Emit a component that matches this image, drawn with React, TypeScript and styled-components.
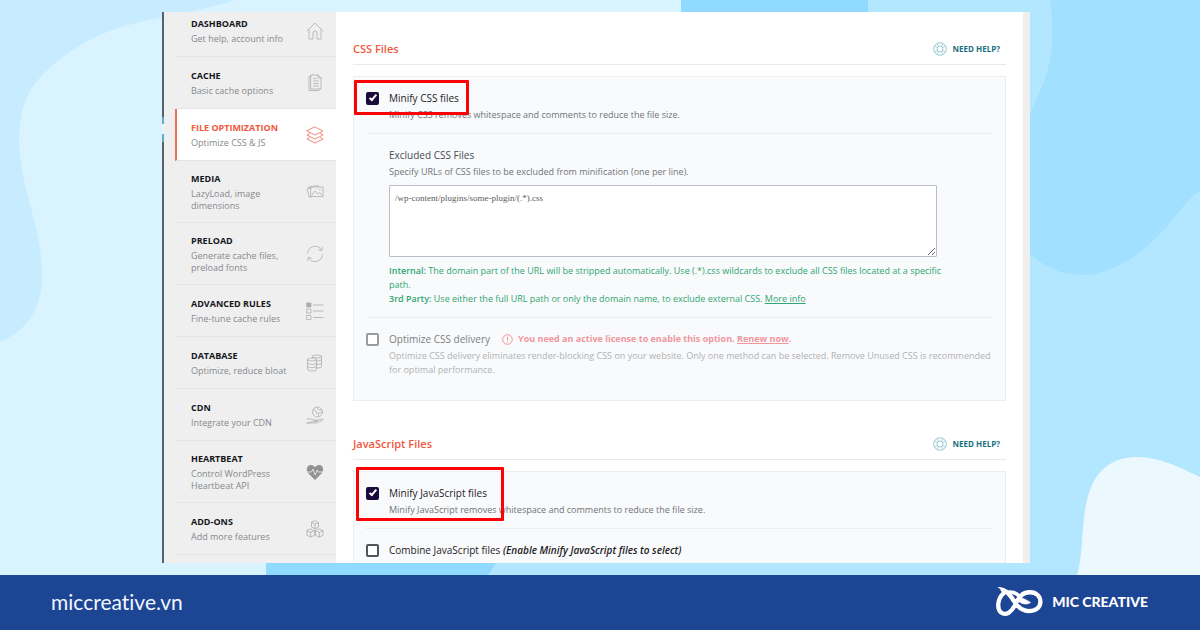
import React from "react";
import styled, { createGlobalStyle, css } from "styled-components";

const GlobalStyle = createGlobalStyle`
  *, *::before, *::after { box-sizing: border-box; }
  html, body, #root { height: 100%; }
  body {
    margin: 0;
    font-family: "Open Sans", "Noto Sans", sans-serif;
    font-size: 9px;
    line-height: 14px;
    color: #747a80;
  }
  h2, h3, p { margin: 0; }
`;

const Page = styled.div`
  position: relative;
  display: flex;
  flex-direction: column;
  height: 100%;
  background: #d9f3ff;
`;

const Backdrop = styled.svg`
  position: absolute;
  inset: 0;
  width: 100%;
  height: 100%;
`;

const Stage = styled.main`
  position: relative;
  flex: 1;
  min-height: 0;
  display: flex;
  padding: 12px 170px 12px 162px;
`;

const Screen = styled.div`
  flex: 1;
  min-width: 0;
  display: flex;
  overflow: hidden;
  background: #fff;
  border-right: 7px solid #f0efed;
`;

/* ---------- Sidebar ---------- */

const Sidebar = styled.nav`
  flex: none;
  width: 174px;
  padding-left: 13px;
  background:
    linear-gradient(#54636b 0 105px, #6ba6cf 105px 112px, #e4f6ff 112px 122px, #6ba6cf 122px 130px, #54636b 130px) left / 2px 100% no-repeat,
    #efefef;
`;

const NavList = styled.div`
  margin-top: -7px;
`;

const NavItem = styled.a<{ $active?: boolean }>`
  display: flex;
  align-items: center;
  justify-content: space-between;
  min-height: 52px;
  padding: 11px 12px 10px 14px;
  border-left: 2px solid transparent;
  border-bottom: 1px solid #e3e4e5;
  color: #868a8e;
  text-decoration: none;
  ${(p) =>
    p.$active &&
    css`
      background: #fff;
      border-left-color: #ee6f57;
    `}
`;

const NavText = styled.span`
  display: flex;
  flex-direction: column;
  gap: 2px;
  width: 106px;
`;

const NavTitle = styled.span<{ $active?: boolean }>`
  font-weight: 700;
  line-height: 14px;
  white-space: nowrap;
  color: ${(p) => (p.$active ? "#f0593e" : "#15171c")};
`;

const NavDesc = styled.span`
  line-height: 12px;
`;

const NavIcon = styled.svg<{ $active?: boolean }>`
  flex: none;
  width: 18px;
  height: 18px;
  fill: none;
  stroke: ${(p) => (p.$active ? "#ee6f57" : "#acaeb0")};
  stroke-width: 0.8;
  stroke-linejoin: round;
  stroke-linecap: round;
`;

/* ---------- Settings ---------- */

const Content = styled.div`
  flex: 1;
  min-width: 0;
  padding: 22px 17px 0;
`;

const Section = styled.section`
  margin-bottom: 28px;
`;

const SectionHead = styled.header`
  display: flex;
  align-items: center;
  justify-content: space-between;
  height: 31px;
  margin-bottom: 11px;
  padding-right: 6px;
  border-bottom: 1px solid #e2ebee;
`;

const SectionTitle = styled.h2`
  font-size: 11px;
  font-weight: 600;
  line-height: 16px;
  color: #f0593e;
`;

const HelpLink = styled.a`
  display: flex;
  align-items: center;
  gap: 6px;
  font-size: 8px;
  font-weight: 700;
  color: #1d6f80;
  text-decoration: none;
`;

const HelpIcon = styled.svg`
  width: 14px;
  height: 14px;
  fill: none;
  stroke: #7fbcc7;
  stroke-width: 0.8;
`;

const Panel = styled.div`
  padding: 0 12px;
  border: 1px solid #eceef0;
  background: #f9fafb;
`;

const Row = styled.div<{ $last?: boolean; $indent?: boolean }>`
  position: relative;
  padding: 13px 0 ${(p) => (p.$last ? 23 : 11)}px ${(p) => (p.$indent ? 23 : 0)}px;
  border-bottom: ${(p) => (p.$last ? "none" : "1px solid #eceff1")};
`;

const OptionLine = styled.div`
  display: flex;
  align-items: center;
  height: 16px;
`;

const Checkbox = styled.input`
  appearance: none;
  flex: none;
  display: grid;
  place-items: center;
  width: 13px;
  height: 13px;
  margin: 0 10px 0 0;
  border: 2px solid #50565c;
  border-radius: 2px;
  background: #fff;
  &:checked {
    border-color: #1b0b3b;
    background: #1b0b3b;
  }
  &:checked::after {
    content: "";
    width: 4px;
    height: 8px;
    margin-top: -2px;
    border: solid #fff;
    border-width: 0 2px 2px 0;
    transform: rotate(40deg);
  }
  &:disabled {
    border-color: #9a9da0;
  }
`;

const OptionLabel = styled.label<{ $muted?: boolean }>`
  font-size: 10px;
  font-weight: 500;
  line-height: 16px;
  white-space: nowrap;
  color: ${(p) => (p.$muted ? "#7c8084" : "#1d2126")};
`;

const FieldLabel = styled.label`
  display: block;
  font-size: 10px;
  font-weight: 500;
  line-height: 16px;
  color: #484d53;
`;

const Note = styled.em`
  font-weight: 600;
`;

const Description = styled.p<{ $muted?: boolean; $indent?: boolean }>`
  margin-top: 2px;
  padding-left: ${(p) => (p.$indent ? 23 : 0)}px;
  color: ${(p) => (p.$muted ? "#b0b3b6" : "#6f7479")};
`;

const UrlBox = styled.textarea`
  display: block;
  width: calc(100% - 56px);
  height: 72px;
  margin: 6px 0 7px;
  padding: 5px;
  border: 1px solid #b9bcc9;
  border-radius: 1px;
  background: #fff;
  font: 9px/14px "Liberation Serif", serif;
  color: #5b5b5b;
`;

const Hint = styled.p`
  padding-right: 44px;
  color: #2fa673;
  a { color: inherit; }
  strong { font-weight: 600; }
`;

const License = styled.span`
  display: flex;
  align-items: center;
  gap: 5px;
  margin-left: 12px;
  font-size: 9px;
  font-weight: 700;
  white-space: nowrap;
  color: #f0979e;
  a { color: inherit; }
`;

const AlertIcon = styled.svg`
  width: 11px;
  height: 11px;
  fill: none;
  stroke: #f0979e;
`;

const Marker = styled.div<{ $x: number; $y: number; $w: number; $h: number }>`
  position: absolute;
  left: ${(p) => p.$x}px;
  top: ${(p) => p.$y}px;
  width: ${(p) => p.$w}px;
  height: ${(p) => p.$h}px;
  border: 3px solid #fb0207;
  border-radius: 1px;
  pointer-events: none;
`;

/* ---------- Footer ---------- */

const Footer = styled.footer`
  position: relative;
  flex: none;
  display: flex;
  align-items: center;
  justify-content: space-between;
  height: 55px;
  padding: 0 52px 2px 51px;
  background: #1c4594;
  color: #fff;
  font-family: Lato, sans-serif;
  font-variant-ligatures: none;
`;

const Site = styled.a`
  font-size: 21px;
  line-height: 28px;
  color: #f2f6ff;
  text-decoration: none;
`;

const Brand = styled.div`
  display: flex;
  align-items: center;
  gap: 8px;
  font-size: 14px;
  font-weight: 900;
  line-height: 20px;
`;

const Logo = styled.svg`
  width: 49px;
  height: 31px;
  fill: none;
  stroke: #fff;
  stroke-width: 13;
  stroke-linecap: round;
`;

type Item = { title: string; desc: string; active?: boolean; icon: React.ReactNode };

const items: Item[] = [
  {
    title: "DASHBOARD",
    desc: "Get help, account info",
    icon: <path d="M1 9 9 1l8 8M3 8v9h4v-6a2 2 0 0 1 4 0v6h4V8" />,
  },
  {
    title: "CACHE",
    desc: "Basic cache options",
    icon: <path d="M5 1h7l3 3v11H5zM12 1v3h3M5 2.500H3v14h10V15M7.500 7h5M7.500 9.500h5M7.500 12h5M7.500 4.500H10" />,
  },
  {
    title: "FILE OPTIMIZATION",
    desc: "Optimize CSS & JS",
    active: true,
    icon: <path d="m9 1 8 4-8 4-8-4zM3.500 7.500 1 9l8 4 8-4-2.500-1.500M3.500 11.500 1 13l8 4 8-4-2.500-1.500" />,
  },
  {
    title: "MEDIA",
    desc: "LazyLoad, image dimensions",
    icon: <path d="M5 4h12v9.500H5zM5 5 1 6l2.500 8.500L6 13.500M3 5.500 2.500 4 12 2.500l.5 1.500M6 12l3-4 3 3 1.500-1.500 2.500 2.500M13.500 6.500h.6" />,
  },
  {
    title: "PRELOAD",
    desc: "Generate cache files, preload fonts",
    icon: <path d="M1.500 8a7.600 7.600 0 0 1 14-3M16.500 10a7.600 7.600 0 0 1-14 3M16.500 2.500 15.600 5.500 12.800 5M1.500 15.500l.9-3 2.800.5" />,
  },
  {
    title: "ADVANCED RULES",
    desc: "Fine-tune cache rules",
    icon: (
      <>
        <path d="M1 7h4v4H1zM1 13.500h4v4H1zM7.500 3H17M7.500 9H17M7.500 15.500H17" />
        <path d="M1 1h4v4H1z" fill="#a9abad" />
      </>
    ),
  },
  {
    title: "DATABASE",
    desc: "Optimize, reduce bloat",
    icon: (
      <path d="M1.500 5.500c0-2 9-2 9 0v10c0 2-9 2-9 0zM1.500 5.500c0 2 9 2 9 0M1.500 9c0 2 9 2 9 0M1.500 12.300c0 2 9 2 9 0M6.500 3.500V2.500c0-2 9-2 9 0v10c0 1-2 1.500-5 1.500M6.500 2.500c0 2 9 2 9 0M10.500 7c3 0 5-.5 5-1.500M10.500 10.500c3 0 5-.5 5-1.500" />
    ),
  },
  {
    title: "CDN",
    desc: "Integrate your CDN",
    icon: (
      <>
        <circle cx="11.500" cy="6" r="5" />
        <path d="M7.500 3.500l2.500 1.500 1 2.500M10.500 1.500l2 2 3 .5M12.500 10V7l3-1M1 13h4l3 1h3c1 0 1 1.500 0 1.500H8M11.500 14.500 16 13c1.500 0 1 1 0 1.500l-5 2.500H1z" />
      </>
    ),
  },
  {
    title: "HEARTBEAT",
    desc: "Control WordPress Heartbeat API",
    icon: (
      <>
        <path
          d="M9 17 2 10C-.8 6.500 1.500 2 4.800 2 7 2 8.300 3 9 4.500 9.700 3 11 2 13.200 2c3.300 0 5.600 4.500 2.800 8z"
          fill="#909294"
          stroke="none"
        />
        <path d="M1 9h4.500l1.500-3 2.200 6 2-5 1 2H17" stroke="#efefef" />
      </>
    ),
  },
  {
    title: "ADD-ONS",
    desc: "Add more features",
    icon: (
      <path d="m9 .8 3.500 1.700v4.500L9 8.700 5.500 7V2.500zM5.500 2.500 9 4.200l3.500-1.700M9 4.200v4.500M4.700 9 8.500 10.700v4.600L4.700 17 1 15.300v-4.600zM1 10.700l3.700 1.600 3.800-1.600M4.700 12.300V17M13.300 9 17 10.700v4.600L13.300 17l-3.800-1.700v-4.600zM9.500 10.700l3.800 1.600 3.700-1.600M13.300 12.300V17" />
    ),
  },
];

function Head({ title }: { title: string }) {
  return (
    <SectionHead>
      <SectionTitle>{title}</SectionTitle>
      <HelpLink href="#help">
        <HelpIcon viewBox="0 0 14 14" aria-hidden="true">
          <circle cx="7" cy="7" r="6.300" />
          <circle cx="7" cy="7" r="3" />
          <path d="M4 1.500 5.500 4.500M10 1.500 8.500 4.500M4 12.500l1.500-3M10 12.500l-1.500-3M1.500 4l3 1.500M12.500 4l-3 1.500M1.500 10l3-1.500M12.500 10l-3-1.500" strokeWidth=".6" />
        </HelpIcon>
        NEED HELP?
      </HelpLink>
    </SectionHead>
  );
}

export default function App() {
  return (
    <Page>
      <GlobalStyle />
      <Backdrop viewBox="0 0 1200 630" preserveAspectRatio="none" aria-hidden="true">
        <path fill="#c7ecff" d="M0 0H235C215 7 200 9 163 17C138 22 118 27 100 35C75 46 48 66 33 86C22 102 19 120 19 145C20 170 28 195 34 220C40 242 42 260 42 278C41 308 28 330 0 342Z" />
        <path fill="#91daff" d="M266 630V560H505Q492 566 482 590V630ZM681 0H868V20H681Z" />
        <path fill="#b3e6ff" d="M488 575 498 560H1020V0H1200V630H482ZM868 0H1060V20H868Z" />
        <path fill="#a1e0ff" d="M1050 0C1055 35 1052 62 1043 84C1037 100 1033 106 1020 140V244C1036 262 1056 275 1082 275C1112 274 1138 257 1160 234C1175 219 1184 202 1200 190V0Z" />
        <path fill="#ebf9ff" d="M1077 576C1085 545 1080 518 1090 490C1099 466 1116 457 1138 457C1164 458 1180 468 1200 477V576Z" />
      </Backdrop>

      <Stage>
        <Screen>
          <Sidebar aria-label="Settings sections">
            <NavList>
              {items.map((it) => (
                <NavItem key={it.title} href="#section" $active={it.active}>
                  <NavText>
                    <NavTitle $active={it.active}>{it.title}</NavTitle>
                    <NavDesc>{it.desc}</NavDesc>
                  </NavText>
                  <NavIcon viewBox="0 0 18 18" $active={it.active} aria-hidden="true">
                    {it.icon}
                  </NavIcon>
                </NavItem>
              ))}
            </NavList>
          </Sidebar>

          <Content>
            <Section>
              <Head title="CSS Files" />
              <Panel>
                <Row>
                  <OptionLine>
                    <Checkbox type="checkbox" id="minify-css" defaultChecked />
                    <OptionLabel htmlFor="minify-css">Minify CSS files</OptionLabel>
                  </OptionLine>
                  <Description $indent>
                    Minify CSS removes whitespace and comments to reduce the file size.
                  </Description>
                  <Marker $x={-12} $y={3} $w={115} $h={35} />
                </Row>
                <Row $indent>
                  <FieldLabel htmlFor="excluded-css">Excluded CSS Files</FieldLabel>
                  <Description>
                    Specify URLs of CSS files to be excluded from minification (one per line).
                  </Description>
                  <UrlBox id="excluded-css" defaultValue="/wp-content/plugins/some-plugin/(.*).css" />
                  <Hint>
                    <strong>Internal:</strong> The domain part of the URL will be stripped automatically. Use
                    (.*).css wildcards to exclude all CSS files located at a specific path.
                  </Hint>
                  <Hint>
                    <strong>3rd Party:</strong> Use either the full URL path or only the domain name, to exclude
                    external CSS. <a href="#more">More info</a>
                  </Hint>
                </Row>
                <Row $last>
                  <OptionLine>
                    <Checkbox type="checkbox" id="optimize-css" disabled />
                    <OptionLabel htmlFor="optimize-css" $muted>
                      Optimize CSS delivery
                    </OptionLabel>
                    <License>
                      <AlertIcon viewBox="0 0 11 11" aria-hidden="true">
                        <circle cx="5.500" cy="5.500" r="4.800" />
                        <path d="M5.500 2.500v3.800M5.500 7.500v1" />
                      </AlertIcon>
                      <span>
                        You need an active license to enable this option. <a href="#renew">Renew now</a>.
                      </span>
                    </License>
                  </OptionLine>
                  <Description $indent $muted>
                    Optimize CSS delivery eliminates render-blocking CSS on your website. Only one method can be
                    selected. Remove Unused CSS is recommended for optimal performance.
                  </Description>
                </Row>
              </Panel>
            </Section>

            <Section>
              <Head title="JavaScript Files" />
              <Panel>
                <Row>
                  <OptionLine>
                    <Checkbox type="checkbox" id="minify-js" defaultChecked />
                    <OptionLabel htmlFor="minify-js">Minify JavaScript files</OptionLabel>
                  </OptionLine>
                  <Description $indent>
                    Minify JavaScript removes whitespace and comments to reduce the file size.
                  </Description>
                  <Marker $x={-10} $y={-5} $w={148} $h={54} />
                </Row>
                <Row $last>
                  <OptionLine>
                    <Checkbox type="checkbox" id="combine-js" />
                    <OptionLabel htmlFor="combine-js">
                      Combine JavaScript files <Note>(Enable Minify JavaScript files to select)</Note>
                    </OptionLabel>
                  </OptionLine>
                </Row>
              </Panel>
            </Section>
          </Content>
        </Screen>
      </Stage>

      <Footer>
        <Site href="#home">miccreative.vn</Site>
        <Brand>
          <Logo viewBox="279 80 147 94" aria-hidden="true">
            <path d="M309 98C287 112 282 146 296 160C312 172 328 158 338 140C350 114 360 99 384 99C404 99 416 112 416 128C415 147 400 156 380 156C358 155 346 142 336 126C326 110 318 97 302 92" />
            <path d="M318 99C338 97 346 104 352 112" strokeWidth="11" />
            <path d="M352 108C358 118 368 118 386 130C374 138 356 136 346 122Z" fill="#fff" stroke="#fff" strokeWidth="2" />
            <path d="M285 84C292 82 304 84 312 92L304 102C298 96 296 88 285 84Z" fill="#fff" stroke="none" />
          </Logo>
          MIC CREATIVE
        </Brand>
      </Footer>
    </Page>
  );
}
